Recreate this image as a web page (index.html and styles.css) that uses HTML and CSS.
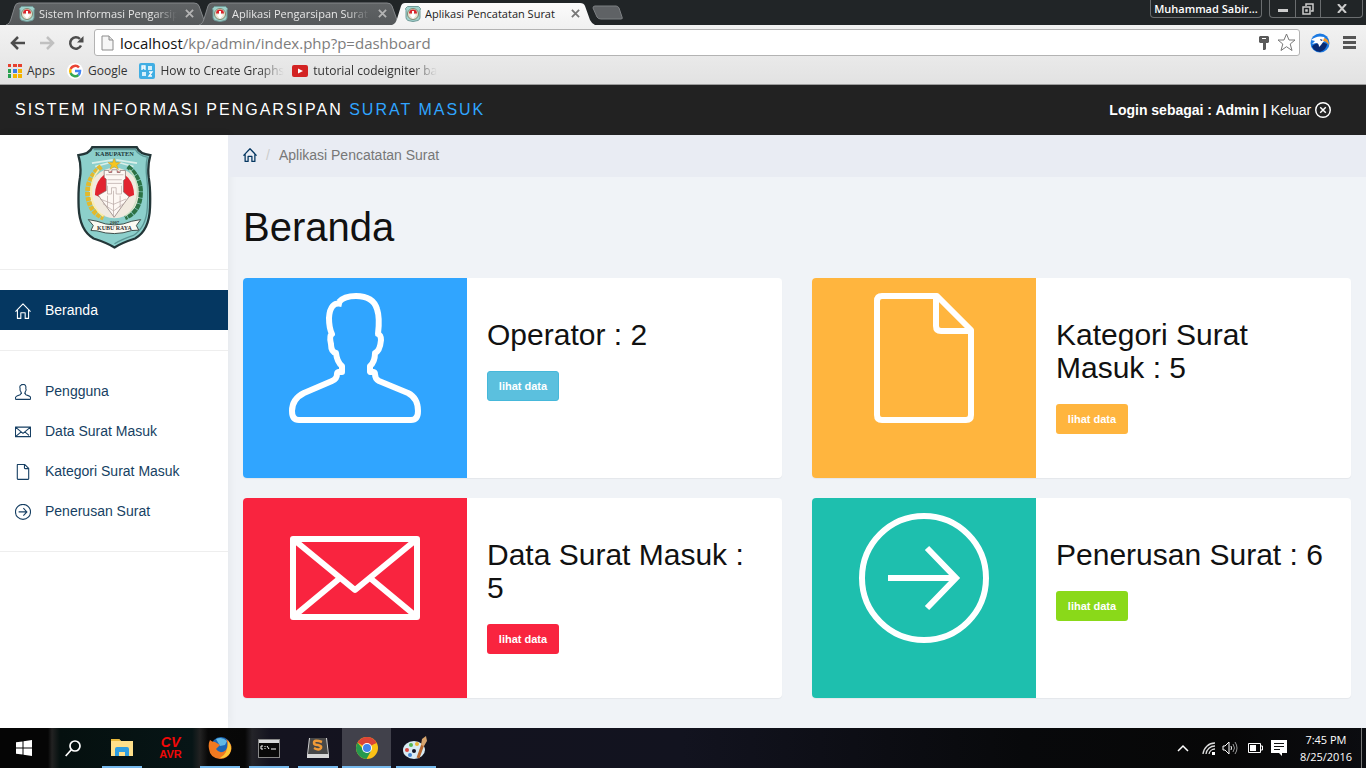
FILE: index.html
```html
<!DOCTYPE html>
<html lang="id">
<head>
<meta charset="utf-8">
<title>Aplikasi Pencatatan Surat</title>
<link rel="stylesheet" href="styles.css">
</head>
<body>
<svg class="defs" width="0" height="0" aria-hidden="true">
  <defs>
    <linearGradient id="tabDim" x1="0" y1="0" x2="0" y2="1"><stop offset="0" stop-color="#606365"/><stop offset="1" stop-color="#55585a"/></linearGradient>
    <linearGradient id="tabLit" x1="0" y1="0" x2="0" y2="1"><stop offset="0" stop-color="#fbfbfb"/><stop offset="1" stop-color="#f2f2f2"/></linearGradient>
    <symbol id="tabShape" viewBox="0 0 203 23" preserveAspectRatio="none"><path d="M0 23C3 22 4 20 5 17L9 4Q10 1 13 1H188Q192 1 193 4L198 18Q200 22 203 23"/></symbol>
    <symbol id="favicon" viewBox="0 0 16 16"><path d="M2.500 .5h11l2 2-.5 2v7q0 2-2 3l-5 1-5-1q-2-1-2-3v-7l-.5-2z" fill="#9fd0cb" stroke="#6f9a97"/><circle cx="8" cy="8" r="5.500" fill="#e9e4d2" stroke="#7c8a72"/><path d="M4 7.500a4 4 0 0 1 8 0z" fill="#d9262c"/><path d="M7 5h2v3l2 1-3 4-3-4 2-1z" fill="#fff"/></symbol>
    <symbol id="home" viewBox="0 0 132 132"><path d="M4 72L66 7l62 65M20 56v71h28V80h36v47h28V56"/></symbol>
    <symbol id="user" viewBox="0 0 132 132"><path d="M53 11Q41 8 40 25Q40 35 43 41Q40 43 42 51Q42 59 47 60Q48 69 53 73V79Q48 78 48 81Q48 86 43 88L15 100Q3 106 3 118Q3 127 10 127H122Q129 127 129 118Q129 105 119 100L90 88Q86 86 86 81Q86 78 81 79V73Q86 69 86 60Q91 58 92 47Q92 42 89 41Q91 25 88 16Q84 3 67 3Q55 3 50 9"/></symbol>
    <symbol id="mail" viewBox="0 0 132 132"><path d="M4 26H128V104H4ZM4 26L66 77L128 26M4 104L51 65M128 104L81 65"/></symbol>
    <symbol id="file" viewBox="0 0 132 132"><path d="M24 3H79L113 37V122Q113 127 108 127H24Q19 127 19 122V8Q19 3 24 3ZM78 3V33Q78 38 83 38H113"/></symbol>
    <symbol id="arrow" viewBox="0 0 132 132"><circle cx="66" cy="65" r="62"/><path class="miter" d="M30 65H98M69 35L98 65L69 95"/></symbol>
    <symbol id="close" viewBox="0 0 132 132"><circle cx="66" cy="66" r="60"/><path d="M43 43L89 89M89 43L43 89"/></symbol>
    <symbol id="cross" viewBox="0 0 10 10"><path d="M1 1l8 8M9 1L1 9"/></symbol>
  </defs>
</svg>

<header class="browser">
  <div class="tabstrip">
    <div class="tabs">
      <div class="tab"><svg class="tab-bg"><use href="#tabShape"/></svg><svg class="fav"><use href="#favicon"/></svg><span class="tab-title fade">Sistem Informasi Pengarsipan</span><button class="tab-x" aria-label="Tutup tab"><svg><use href="#cross"/></svg></button></div>
      <div class="tab"><svg class="tab-bg"><use href="#tabShape"/></svg><svg class="fav"><use href="#favicon"/></svg><span class="tab-title fade">Aplikasi Pengarsipan Surat</span><button class="tab-x" aria-label="Tutup tab"><svg><use href="#cross"/></svg></button></div>
      <div class="tab active"><svg class="tab-bg"><use href="#tabShape"/></svg><svg class="fav"><use href="#favicon"/></svg><span class="tab-title">Aplikasi Pencatatan Surat</span><button class="tab-x" aria-label="Tutup tab"><svg><use href="#cross"/></svg></button></div>
      <button class="newtab" aria-label="Tab baru"><svg width="32" height="16" viewBox="0 0 32 16"><path d="M3 1H24Q26 1 27 3L30 12Q31 14 29 14H9Q6 14 5 12L1 3Q1 1 3 1Z" fill="#5f6265" stroke="#7d8083"/></svg></button>
    </div>
    <div class="window-controls">
      <button class="profile">Muhammad Sabir...</button>
      <div class="winbtns">
        <button aria-label="Minimize"><svg width="12" height="12"><rect x="1" y="6" width="10" height="3" fill="#ccc"/></svg></button>
        <button aria-label="Restore"><svg width="12" height="12" viewBox="0 0 12 12" fill="none" stroke="#ccc" stroke-width="1.500"><path d="M4 3V1h7v7H9"/><rect x="1" y="4" width="7" height="7"/><rect x="4" y="7" width="1" height="1"/></svg></button>
        <button class="wide" aria-label="Close"><svg width="10" height="9" viewBox="0 0 10 9" stroke="#ccc" stroke-width="2"><path d="M1 0l8 9M9 0L1 9"/></svg></button>
      </div>
    </div>
  </div>
  <div class="toolbar">
    <button aria-label="Kembali"><svg width="16" height="14" viewBox="0 0 16 14" fill="none" stroke="#4c4c4c" stroke-width="2.500"><path d="M15 7H2M8 1L2 7l6 6"/></svg></button>
    <button aria-label="Maju"><svg width="16" height="14" viewBox="0 0 16 14" fill="none" stroke="#c0c0c0" stroke-width="2.500"><path d="M1 7H14M8 1l6 6-6 6"/></svg></button>
    <button aria-label="Muat ulang"><svg width="16" height="16" viewBox="0 0 16 16" fill="none" stroke="#4c4c4c" stroke-width="2.500"><path d="M13 10.500A5.700 5.700 0 1 1 12 4"/><path d="M15.500 1v6.500H9z" fill="#4c4c4c" stroke="none"/></svg></button>
    <div class="address">
      <svg width="13" height="16" viewBox="0 0 13 16"><path d="M1 1h7l4 4v10H1z" fill="#f6f6f6" stroke="#8c8c8c"/><path d="M8 1v4h4" fill="#ddd" stroke="#8c8c8c"/></svg>
      <div class="url"><span>localhost</span>/kp/admin/index.php?p=dashboard</div>
      <svg width="10" height="14" viewBox="0 0 10 14" fill="#5a5a5a"><path d="M1 0h8l1 1v5l-1 1H7v6l-1 1H4V7H1L0 6V1z"/><path d="M3 2h4v1H3z" fill="#fff"/></svg>
      <svg width="19" height="19" viewBox="0 0 19 19"><path d="M9.500 1l2.500 6h6l-4.800 4 1.800 6.500-5.500-3.800-5.500 3.800L5.800 11 1 7h6z" fill="#fff" stroke="#777"/></svg>
    </div>
    <svg class="ext" width="20" height="20" viewBox="0 0 20 20"><circle cx="10" cy="10" r="9.500" fill="#1b79e2"/><path d="M2 13Q8 9 12 9L17 11Q17 16 10 19Q3 18 2 13Z" fill="#082a72"/><path d="M1 7Q7 2 14 4L16 7Q12 9 11 12L9 14Q9 10 6 10L2 11L5 8Z" fill="#fff"/><path d="M10 6l3 1-2 1z" fill="#082a72"/><path d="M14 5Q19 6 19 12Q16 8 13 8Z" fill="#f59b2d"/></svg>
    <button class="menu" aria-label="Menu"><svg width="13" height="13"><path d="M0 1.500h13M0 6.500h13M0 11.500h13" stroke="#555" stroke-width="3"/></svg></button>
  </div>
  <nav class="bookmarks" aria-label="Bookmark">
    <a href="#"><svg width="14" height="14" viewBox="0 0 14 14"><path d="M0 0h3v3H0zM5 0h4v3H5zM10 0h4v3h-4z" fill="#e6402f"/><path d="M0 5h3v4H0z" fill="#2aa150"/><path d="M5 5h4v4H5z" fill="#3c7de6"/><path d="M10 5h4v4h-4z" fill="#f4b400"/><path d="M0 10h3v4H0z" fill="#2aa150"/><path d="M5 10h4v4H5zM10 10h4v4h-4z" fill="#f4b400"/></svg><span>Apps</span></a>
    <a href="#" class="google"><svg width="16" height="16" viewBox="0 0 16 16" fill="none" stroke-width="2.500"><circle cx="8" cy="8" r="8" fill="#fff"/><path d="M12 4.500A5 5 0 0 0 3.600 6" stroke="#ea4335"/><path d="M3.600 6a5 5 0 0 0 0 4" stroke="#fbbc05"/><path d="M3.600 10a5 5 0 0 0 7.900 2" stroke="#34a853"/><path d="M8 8h5q0 2.500-1.500 4" stroke="#4285f4"/></svg><span>Google</span></a>
    <a href="#" class="graphs"><svg width="16" height="16" viewBox="0 0 16 16"><rect width="16" height="16" rx="2" fill="#41aee3"/><path d="M3 7V3h3v4M3 5h3M10 9h3l-3 4h3" fill="none" stroke="#fff" stroke-width="1.300"/><path d="M9 3h4v4H9zM3 9h4v4H3z" fill="#d5f0fc"/></svg><span class="fade">How to Create Graphs</span></a>
    <a href="#" class="tutorial"><svg width="16" height="12" viewBox="0 0 16 12"><rect width="16" height="12" rx="2" fill="#d32323"/><path d="M6 3.500l5 2.500-5 2.500z" fill="#fff"/></svg><span class="fade">tutorial codeigniter ba</span></a>
  </nav>
</header>

<div class="app">
  <header class="topbar">
    <div class="brand">SISTEM INFORMASI PENGARSIPAN <span>SURAT MASUK</span></div>
    <div class="login"><b>Login sebagai : Admin | </b><a href="#">Keluar <svg class="ico"><use href="#close"/></svg></a></div>
  </header>
  <div class="body">
    <aside class="sidebar">
      <div class="logo">
        <svg viewBox="50 28 226 312" role="img" aria-label="Kabupaten Kubu Raya">
          <path d="M96 34H230Q238 54 271 58Q262 90 266 125Q272 160 270 215Q268 285 225 309Q185 322 163 336Q140 322 100 309Q58 285 55 215Q53 160 59 125Q64 90 54 58Q88 54 96 34Z" fill="#8ccfcb" stroke="#233638" stroke-width="7"/>
          <path d="M100 41H226Q236 58 262 64Q256 90 260 125Q265 160 262 215Q259 275 220 300Q185 312 163 325" fill="none" stroke="#5b9695" stroke-width="4"/>
          <path d="M95 82L158 72M231 82L168 72M105 92L150 80M220 92L176 80" stroke="#d9efe9" stroke-width="5"/>
          <text x="163" y="60" text-anchor="middle" class="crest-name">KABUPATEN</text>
          <circle cx="163" cy="172" r="76" fill="#f1eadf"/>
          <path d="M104 178A59 72 0 0 1 222 178L205 185H120Z" fill="#e2232f"/>
          <path d="M123 92Q80 125 82 175Q86 230 130 247" fill="none" stroke="#e3b92c" stroke-width="15" stroke-dasharray="12 3"/>
          <path d="M116 102Q90 130 93 175Q97 220 130 242" fill="none" stroke="#f9eeb0" stroke-width="5"/>
          <path d="M203 92Q245 125 242 175Q239 230 195 247" fill="none" stroke="#2c7245" stroke-width="13" stroke-dasharray="16 2"/>
          <path d="M208 102Q235 130 232 175Q228 220 195 242" fill="none" stroke="#c8dfc1" stroke-width="4"/>
          <path d="M132 104h14v6h9v-8h16v8h9v-6h16v25l-6 5v35l17 14-15 20-30 42-32-44-16-22 24-14v-35l-6-5z" fill="#fdf8f4" stroke="#7d6a69" stroke-width="2"/>
          <path d="M137 117h53M142 132h43M142 143h43M142 150v25h12v-19h14v19h16v-25M120 190l40 16 38-16M128 204l32 22 30-22M142 180v36M160 165v80M180 180v36" fill="none" stroke="#b3a2a0" stroke-width="2"/>
          <path d="M162 67l5 13h14l-11 8 5 13-13-8-13 8 5-13-11-8h14z" fill="#f5c51f" stroke="#b7831c"/>
          <path d="M84 252L110 257Q163 279 215 257L242 252L229 270L236 284L215 285Q163 303 110 286L92 285L99 270Z" fill="#fbfaf2" stroke="#3d4e4b" stroke-width="3"/>
          <text x="163" y="266" text-anchor="middle" class="crest-year">2007</text>
          <text x="163" y="284" text-anchor="middle" class="crest-band">KUBU RAYA</text>
        </svg>
      </div>
      <nav class="nav-group" aria-label="Utama"><a class="nav-item current" href="#"><svg class="ico"><use href="#home"/></svg>Beranda</a></nav>
      <nav class="nav-group data" aria-label="Data">
        <a class="nav-item" href="#"><svg class="ico"><use href="#user"/></svg>Pengguna</a>
        <a class="nav-item" href="#"><svg class="ico"><use href="#mail"/></svg>Data Surat Masuk</a>
        <a class="nav-item" href="#"><svg class="ico"><use href="#file"/></svg>Kategori Surat Masuk</a>
        <a class="nav-item" href="#"><svg class="ico"><use href="#arrow"/></svg>Penerusan Surat</a>
      </nav>
    </aside>
    <main>
      <div class="breadcrumb"><a href="#" aria-label="Beranda"><svg class="ico"><use href="#home"/></svg></a><i>/</i><span>Aplikasi Pencatatan Surat</span></div>
      <div class="content">
        <h1>Beranda</h1>
        <div class="cards">
          <section class="card blue"><div class="pic"><svg><use href="#user"/></svg></div><div class="info"><h2>Operator : 2</h2><button class="btn cyan">lihat data</button></div></section>
          <section class="card orange"><div class="pic"><svg><use href="#file"/></svg></div><div class="info"><h2>Kategori Surat Masuk : 5</h2><button class="btn amber">lihat data</button></div></section>
          <section class="card red"><div class="pic"><svg><use href="#mail"/></svg></div><div class="info"><h2>Data Surat Masuk : 5</h2><button class="btn crimson">lihat data</button></div></section>
          <section class="card teal"><div class="pic"><svg><use href="#arrow"/></svg></div><div class="info"><h2>Penerusan Surat : 6</h2><button class="btn green">lihat data</button></div></section>
        </div>
      </div>
    </main>
  </div>
</div>

<footer class="taskbar">
  <div class="apps">
    <button aria-label="Start"><svg width="16" height="16" viewBox="0 0 16 16" fill="#fff"><path d="M0 2.300L6.500 1.400V7.500H0zM7.500 1.200L16 0V7.500H7.500zM0 8.500H6.500V14.600L0 13.700zM7.500 8.500H16V16L7.500 14.800z"/></svg></button>
    <button aria-label="Cari"><svg width="16" height="17" viewBox="0 0 16 17" fill="none" stroke="#fff" stroke-width="1.700"><circle cx="10" cy="6" r="5"/><path d="M6.500 9.500L.7 16"/></svg></button>
    <button class="open" aria-label="File Explorer"><svg width="22" height="20" viewBox="0 0 22 20"><path d="M0 1h8l2 2h12v15H0z" fill="#ffe08a"/><path d="M0 1h8l2 2H0z" fill="#e8b93c"/><path d="M4 18v-7q0-2 2-2h10q2 0 2 2v7h-4v-4H8v4z" fill="#2f9ee0"/></svg></button>
    <button aria-label="CodeVisionAVR"><span class="cvavr"><i>CV</i><b>AVR</b></span></button>
    <button class="open" aria-label="Firefox"><svg width="24" height="24" viewBox="0 0 24 24"><circle cx="13" cy="11" r="10" fill="#1c66b5"/><path d="M8 3Q14 0 19 5L17 9 12 10z" fill="#61b9e5"/><path d="M2 4Q4 6 7 6L12 9L8 13Q12 19 18 14Q21 9 18 3Q25 8 23 15Q20 23 12 23Q2 22 1 13Q0 8 2 4Z" fill="#f07920"/><path d="M20 5Q25 10 22 17Q18 23 12 22Q20 18 20 5Z" fill="#fdc735"/></svg></button>
    <button class="open" aria-label="Command Prompt"><svg width="22" height="19" viewBox="0 0 22 19"><rect x=".5" y=".5" width="21" height="18" fill="#090909" stroke="#888"/><path d="M1 1h20v3H1z" fill="#d8dadb"/><path d="M3 7h2M3 7v3h2M7 7v1M7 9v1M9 7l2 3M13 10h5" stroke="#fff"/></svg></button>
    <button class="open" aria-label="Sublime Text"><svg width="24" height="22" viewBox="0 0 24 22"><path d="M3 1h18l2 17v3H1v-3z" fill="#d7d7d7"/><path d="M4 1h16l2 16H2z" fill="#484848"/><path d="M16 5Q8 2 8 6Q8 8 12 8Q16 9 15 11Q13 14 8 11" fill="none" stroke="#f09a37" stroke-width="2.500"/></svg></button>
    <button class="open focus" aria-label="Chrome"><svg width="22" height="22" viewBox="0 0 22 22"><circle cx="11" cy="11" r="11" fill="#fbc116"/><path d="M11 11L1.500 5.500A11 11 0 0 1 20.500 5.500z" fill="#dc4437"/><path d="M11 11h-5L1.500 5.500A11 11 0 0 0 10.500 22L15 14z" fill="#26994e"/><path d="M11 6h9.800L15 8z" fill="#dc4437"/><circle cx="11" cy="11" r="5" fill="#fff"/><circle cx="11" cy="11" r="4" fill="#4183ec"/></svg></button>
    <button class="open" aria-label="Paint"><svg width="25" height="24" viewBox="0 0 25 24"><ellipse cx="11" cy="14" rx="11" ry="9" fill="#d8ebf4"/><circle cx="11" cy="15" r="2" fill="#111323"/><circle cx="4" cy="14" r="2" fill="#da4740"/><circle cx="8" cy="9" r="2" fill="#55b850"/><circle cx="14" cy="8" r="2" fill="#eab635"/><circle cx="7" cy="19" r="2" fill="#4686d2"/><path d="M15 22L20 8" stroke="#b66830" stroke-width="3"/><path d="M18 9l1-6 4-3 1 5-3 5z" fill="#d6a46e"/></svg></button>
  </div>
  <div class="tray">
    <svg width="12" height="8" viewBox="0 0 12 8" fill="none" stroke="#fff" stroke-width="1.500"><path d="M1 7l5-5 5 5"/></svg>
    <svg class="wifi" width="14" height="13" viewBox="0 0 14 13" fill="none" stroke="#ddd"><path d="M1 12A12 12 0 0 1 13 1M4 12A9 9 0 0 1 13 4M7 12A6 6 0 0 1 13 7" stroke-width="1.300"/><path d="M10 10h3v3h-3z" fill="#fff" stroke="none"/></svg>
    <svg class="vol" width="17" height="14" viewBox="0 0 17 14" fill="none" stroke="#fff"><path d="M1 5h2l4-4v12L3 9H1zM9 5q1 2 0 4"/><path d="M11 3q3 4 0 8M13 1q4 6 0 12" stroke="#999"/></svg>
    <svg class="bat" width="15" height="10" viewBox="0 0 15 10" fill="none" stroke="#fff"><path d="M.5.500h12v9H.5zM13 3h1.500v4H13"/><path d="M2 2h6v6H2z" fill="#fff" stroke="none"/></svg>
    <svg class="note" width="16" height="16" viewBox="0 0 16 16"><path d="M0 0h16v13h-5v3l-3-3H0z" fill="#fff"/><path d="M3 3.500h10M3 6.500h10M3 9.500h6" stroke="#111"/></svg>
    <div class="clock"><span>7:45 PM</span><span>8/25/2016</span></div>
  </div>
</footer>
</body>
</html>
```
FILE: styles.css
```css
* { box-sizing: border-box; }
body {
  margin: 0;
  min-height: 100vh;
  display: flex;
  flex-direction: column;
  background: #f0f3f7;
  color: #111;
  font: 14px/20px "Liberation Sans", Arial, sans-serif;
}
button { font: inherit; border: 0; padding: 0; background: none; color: inherit; cursor: pointer; }
a { color: inherit; text-decoration: none; }
svg { display: block; flex: none; }
.defs { position: absolute; }

/* Browser window */
.browser { background: #212527; font: 12px/16px "Open Sans", sans-serif; }
.tabstrip { display: flex; justify-content: space-between; height: 25px; }
.tabs { display: flex; align-items: flex-end; padding-left: 6px; }
.tab {
  position: relative;
  z-index: 0;
  display: flex;
  align-items: center;
  width: 203px;
  height: 23px;
  margin-right: -10px;
  padding: 0 15px 0 13px;
  color: #e6e6e6;
  font-size: 11px;
}
.tab.active { z-index: 1; color: #222; }
.tab-bg { position: absolute; inset: 0; width: 100%; height: 100%; z-index: -1; fill: url(#tabDim); stroke: #84878a; }
.active .tab-bg { fill: url(#tabLit); stroke: none; }
.fav { width: 16px; height: 16px; margin-right: 4px; }
.tab-title { flex: 1; overflow: hidden; white-space: nowrap; }
.fade { overflow: hidden; white-space: nowrap; mask-image: linear-gradient(to left, transparent, #000 24px); }
.tab .fade { margin-right: 8px; }
.tab-x svg { width: 9px; height: 9px; stroke: #b4b4b4; stroke-width: 2; }
.active .tab-x svg { stroke: #777; }
.newtab { align-self: center; margin-left: 7px; z-index: 1; }
.window-controls { display: flex; align-items: flex-start; gap: 7px; padding-right: 3px; }
.profile, .winbtns { height: 18px; border: 1px solid #6a6d6f; border-top: 0; border-radius: 0 0 4px 4px; }
.profile { width: 112px; color: #fff; font-size: 11px; font-weight: 600; line-height: 16px; }
.winbtns { display: flex; }
.winbtns button { display: flex; align-items: center; justify-content: center; width: 25px; }
.winbtns button + button { border-left: 1px solid #6a6d6f; }
.winbtns .wide { width: 42px; }
.toolbar {
  display: flex;
  align-items: center;
  gap: 13px;
  height: 33px;
  padding: 2px 10px 0;
  background: linear-gradient(#f2f2f2, #e9e9e9);
}
.address {
  flex: 1;
  display: flex;
  align-items: center;
  height: 27px;
  margin: 0 -3px;
  padding: 0 3px 0 6px;
  background: #fff;
  border: 1px solid #b3b3b3;
  border-radius: 3px;
  gap: 8px;
}
.url { flex: 1; margin-left: -2px; font-size: 15px; line-height: 20px; color: #7d7d7d; }
.url span { color: #111; }
.bookmarks {
  display: flex;
  align-items: center;
  height: 27px;
  padding: 0 8px;
  background: linear-gradient(#e9e9e9, #e2e2e2);
  border-bottom: 1px solid #9c9c9c;
  color: #333;
}
.bookmarks a { display: flex; align-items: center; gap: 5px; font-size: 12px; }
.bookmarks .google { margin-left: 12px; }
.bookmarks .graphs { margin-left: 12px; }
.bookmarks .tutorial { margin-left: 8px; }

/* Application */
.app { flex: 1; display: flex; flex-direction: column; }
.topbar {
  display: flex;
  align-items: center;
  justify-content: space-between;
  height: 50px;
  padding: 0 35px 0 15px;
  background: #222;
  color: #fff;
}
.brand { font-size: 16px; letter-spacing: 2px; }
.brand span { color: #30a5ff; }
.login, .login a { display: flex; align-items: center; white-space: pre; }
.ico { width: 16px; height: 16px; }
.ico, .pic svg { fill: none; stroke: currentColor; stroke-width: 9; stroke-linejoin: round; overflow: visible; }
.miter { stroke-linejoin: miter; }
.login .ico { stroke-width: 12; }
.body { flex: 1; display: flex; }
.sidebar { width: 228px; flex: none; background: #fff; box-shadow: 1px 0 10px rgba(0, 0, 0, .05); color: #163f63; }
.logo { display: flex; justify-content: center; padding: 10px 0 20px; border-bottom: 1px solid #eee; }
.logo svg { width: 75px; height: 104px; }
.crest-name { font: bold 19px "Liberation Serif", serif; fill: #20383a; }
.crest-year { font: bold 14px "Liberation Serif", serif; fill: #333; }
.crest-band { font: bold 18px "Liberation Serif", serif; fill: #333; }
.nav-group { padding: 20px 0; border-bottom: 1px solid #eee; }
.nav-item { display: flex; align-items: center; gap: 14px; height: 40px; padding: 0 15px; }
.nav-item .ico { margin-top: 2px; }
.nav-item.current { background: #053761; color: #fff; }
main { flex: 1; min-width: 0; }
.breadcrumb { display: flex; align-items: center; height: 42px; padding: 0 15px 2px; background: #e9ecf3; color: #777; }
.breadcrumb a { color: #053761; }
.breadcrumb .ico { width: 14px; height: 14px; stroke-width: 12; }
.breadcrumb i { padding: 0 9px; color: #ccc; font-style: normal; }
.content { padding: 28px 15px 30px; }
h1 { margin: 0 0 29px; font-size: 40px; font-weight: 400; line-height: 44px; }
.cards { display: grid; grid-template-columns: 1fr 1fr; gap: 20px 30px; }
.card { display: flex; min-height: 200px; background: #fff; border-radius: 4px; overflow: hidden; box-shadow: 0 1px 1px rgba(0, 0, 0, .05); }
.pic { flex: 0 0 224px; display: flex; justify-content: center; align-items: flex-start; padding: 15px; color: #fff; }
.pic svg { width: 132px; height: 132px; stroke-width: 6; }
.blue .pic { background: #30a5ff; }
.orange .pic { background: #ffb53e; }
.red .pic { background: #f9243f; }
.teal .pic { background: #1ebfae; }
.info { flex: 1; padding: 40px 20px 20px; }
h2 { margin: 0 0 20px; font-size: 30px; font-weight: 400; line-height: 33px; }
.btn { width: 72px; height: 30px; border-radius: 3px; color: #fff; font-size: 11px; font-weight: 700; line-height: 18px; }
.cyan { background: #5bc0de; border: 1px solid #46b8da; }
.amber { background: #ffb53e; }
.crimson { background: #f9243f; }
.green { background: #8ad919; }

/* Desktop taskbar */
.taskbar {
  display: flex;
  justify-content: space-between;
  height: 40px;
  background: linear-gradient(90deg, #050505 0, #050505 48px, #222 52px, #05100f 60px, #071516 192px, #222 200px, #080808 208px, #070707 245px, #242429 252px, #14131f 270px, #12131f 50%, #08090b 75%, #070707 90%, #0b0c10);
  color: #fff;
}
.apps { display: flex; }
.apps button { position: relative; display: flex; align-items: center; justify-content: center; width: 49px; }
.apps button:first-child { width: 48px; }
.open::after { content: ""; position: absolute; bottom: 0; left: 5px; right: 4px; height: 2px; background: #76b9ed; }
.focus { background: #41414b; }
.focus::after { left: 0; right: 0; }
.cvavr { display: flex; flex-direction: column; align-items: center; color: #f00808; font: bold 11px/11px "Liberation Sans", sans-serif; }
.cvavr i { font-size: 14px; line-height: 13px; }
.tray { display: flex; align-items: center; margin-right: 4px; padding-right: 9px; border-right: 1px solid #777; }
.wifi { margin-left: 13px; }
.vol { margin-left: 6px; }
.bat { margin-left: 9px; }
.note { margin-left: 8px; }
.clock { display: flex; flex-direction: column; align-items: center; margin-left: 13px; font: 11px/17px "Open Sans", sans-serif; }
```
